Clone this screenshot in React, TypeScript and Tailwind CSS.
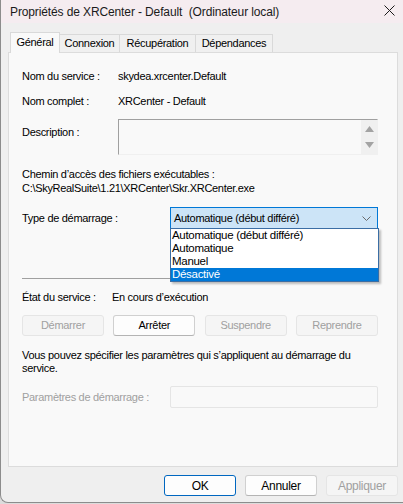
import React from "react";

const font = { fontFamily: '"Liberation Sans", Arial, sans-serif' };

function Tab({ label, active, className }: { label: string; active?: boolean; className: string }) {
  if (active) {
    return (
      <div
        className={`h-[21px] flex items-center justify-center border border-b-0 border-[#d9d9d9] bg-[#f9f9f9] pb-[2px] ${className}`}
      >
        {label}
      </div>
    );
  }
  return (
    <div
      className={`h-[18px] mb-[1px] -ml-px flex items-center justify-center border border-b-0 border-[#d9d9d9] bg-[#f0f0f0] ${className}`}
    >
      {label}
    </div>
  );
}

function Btn({
  label,
  disabled,
  primary,
  className = "",
}: {
  label: string;
  disabled?: boolean;
  primary?: boolean;
  className?: string;
}) {
  let tone = "bg-[#fdfdfd] border-[#d0d0d0] border-b-[#b4b4b4] text-black";
  if (disabled) tone = "bg-[#f5f5f5] border-[#e5e5e5] text-[#a0a0a0]";
  if (primary) tone = "bg-[#fdfdfd] border-[#0067c0] text-black";
  return (
    <div className={`h-[21px] flex items-center justify-center rounded-[3px] border ${tone} ${className}`}>
      {label}
    </div>
  );
}

export default function App() {
  const options = ["Automatique (début différé)", "Automatique", "Manuel", "Désactivé"];

  return (
    <div
      className="w-[403px] h-[504px] bg-[#dcdcdc] overflow-hidden text-[11px] tracking-[-0.3px] text-black"
      style={font}
    >
      <div className="h-[503px] bg-[#efefef] border-l border-b border-[#8c8c8c] rounded-bl-[8px] flex flex-col">
        {/* title bar */}
        <div className="h-[23px] bg-[#f5ecf0] flex items-center justify-between pl-[9px] pr-[8px]">
          <span className="text-[12px] tracking-[-0.12px] whitespace-pre text-[#1a1a1a]">
            Propriétés de XRCenter - Default  (Ordinateur local)
          </span>
          <svg width="11" height="11" viewBox="0 0 11 11" className="mb-[3px]">
            <path d="M0.5 0.5 L10.5 10.5 M10.5 0.5 L0.5 10.5" stroke="#1a1a1a" strokeWidth="1" />
          </svg>
        </div>

        {/* tabs */}
        <div className="mt-[9px] ml-[9px] flex items-end relative z-10 -mb-px">
          <Tab label="Général" active className="w-[50px]" />
          <Tab label="Connexion" className="w-[61px]" />
          <Tab label="Récupération" className="w-[77px]" />
          <Tab label="Dépendances" className="w-[78px]" />
        </div>

        {/* panel */}
        <div className="ml-[7px] w-[390px] h-[415px] border border-[#dcdcdc] bg-[#f9f9f9] pl-[13px]">
          <div className="w-[356px] flex flex-col">
            <div className="mt-[16px] h-[14px] flex items-center">
              <span className="w-[96px]">Nom du service :</span>
              <span>skydea.xrcenter.Default</span>
            </div>
            <div className="mt-[11px] h-[14px] flex items-center">
              <span className="w-[96px]">Nom complet :</span>
              <span>XRCenter - Default</span>
            </div>
            <div className="mt-[11px] flex items-start">
              <span className="w-[96px] mt-[6px] leading-[14px]">Description :</span>
              <div className="w-[260px] h-[36px] border border-[#a0a0a0] border-r-[#f0f0f0] border-b-[#f0f0f0] bg-[#f9f9f9] flex justify-end">
                <div className="w-[16px] h-full bg-[#f0f0f0] flex flex-col items-center justify-between py-[6px]">
                  <svg width="9" height="6" viewBox="0 0 9 6">
                    <path d="M4.5 0 L9 6 L0 6 Z" fill="#a3a3a3" />
                  </svg>
                  <svg width="9" height="6" viewBox="0 0 9 6">
                    <path d="M0 0 L9 0 L4.5 6 Z" fill="#a3a3a3" />
                  </svg>
                </div>
              </div>
            </div>
            <div className="mt-[12px] h-[14px] leading-[14px]">Chemin d’accès des fichiers exécutables :</div>
            <div className="h-[14px] leading-[14px]">C:\SkyRealSuite\1.21\XRCenter\Skr.XRCenter.exe</div>

            <div className="mt-[12px] h-[22px] flex items-center">
              <span className="w-[148px]">Type de démarrage :</span>
              <div className="relative w-[208px] h-[22px]">
                <div className="h-full border border-[#0078d7] bg-[#cce4f7] flex items-center justify-between pl-[3px] pr-[6px]">
                  <span>Automatique (début différé)</span>
                  <svg width="9" height="5" viewBox="0 0 9 5">
                    <path d="M0.5 0.5 L4.5 4.5 L8.5 0.5" fill="none" stroke="#6a6a6a" strokeWidth="1" />
                  </svg>
                </div>
                <div className="absolute left-0 top-[21px] w-[209px] border border-[#3b6ea5] bg-white shadow-[2px_2px_2px_rgba(0,0,0,0.25)] z-20">
                  {options.map((o, i) => (
                    <div
                      key={o}
                      className={`h-[13px] leading-[13px] pl-[1px] text-[11.5px] ${
                        i === 3 ? "bg-[#0078d7] text-white" : "text-black"
                      }`}
                    >
                      {o}
                    </div>
                  ))}
                </div>
              </div>
            </div>

            <div className="mt-[49px] h-px bg-[#a0a0a0]" />

            <div className="mt-[11px] h-[14px] flex items-center">
              <span className="w-[90px]">État du service :</span>
              <span>En cours d’exécution</span>
            </div>

            <div className="mt-[11px] flex justify-between">
              <Btn label="Démarrer" disabled className="w-[82px]" />
              <Btn label="Arrêter" className="w-[82px]" />
              <Btn label="Suspendre" disabled className="w-[82px]" />
              <Btn label="Reprendre" disabled className="w-[82px]" />
            </div>

            <div className="mt-[13px] leading-[13px]">
              Vous pouvez spécifier les paramètres qui s’appliquent au démarrage du service.
            </div>

            <div className="mt-[11px] h-[22px] flex items-center">
              <span className="w-[148px] text-[#a0a0a0]">Paramètres de démarrage :</span>
              <div className="w-[208px] h-[22px] rounded-[2px] border border-[#e5e5e5] bg-[#f9f9f9]" />
            </div>
          </div>
        </div>

        {/* footer */}
        <div className="mt-[8px] flex justify-end gap-[9px] pr-[5px]">
          <Btn label="OK" primary className="w-[72px] text-[12px]" />
          <Btn label="Annuler" className="w-[72px] text-[12px]" />
          <Btn label="Appliquer" disabled className="w-[72px] text-[12px]" />
        </div>
      </div>
    </div>
  );
}
